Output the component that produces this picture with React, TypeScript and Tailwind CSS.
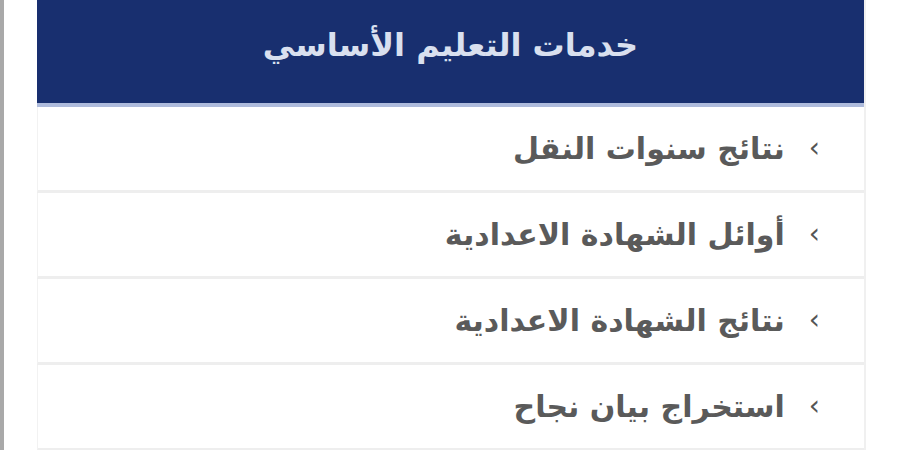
import React from "react";

const items = [
  "نتائج سنوات النقل",
  "أوائل الشهادة الاعدادية",
  "نتائج الشهادة الاعدادية",
  "استخراج بيان نجاح",
];

export default function App() {
  return (
    <div
      className="w-[900px] h-[450px] overflow-hidden bg-white flex"
      style={{ fontFamily: '"DejaVu Sans", "Noto Sans", sans-serif' }}
    >
      <div className="w-[4px] h-full bg-[#a9a9a9]" />
      <div className="ml-[33px] w-[829px] flex flex-col border-r-2 border-[#f0f0f0]">
        <div className="h-[107px] shrink-0 bg-[#182f6f] flex items-center justify-center border-b-[4px] border-[#aebbdc]">
          <span dir="rtl" className="text-[#d9e0ef] text-[32px] font-bold leading-none -mt-[14px]">
            خدمات التعليم الأساسي
          </span>
        </div>
        {items.map((t, i) => (
          <div
            key={i}
            dir="rtl"
            className="h-[86px] shrink-0 flex items-center pr-[44px] border-b-[3px] border-[#eeeeee] border-l border-l-[#f2f2f2]"
          >
            <span className="text-[#555555] text-[28px] leading-none ml-[24px] -mt-[2px]">›</span>
            <span className="text-[#5a5a5a] text-[30px] font-bold leading-none">{t}</span>
          </div>
        ))}
      </div>
    </div>
  );
}
